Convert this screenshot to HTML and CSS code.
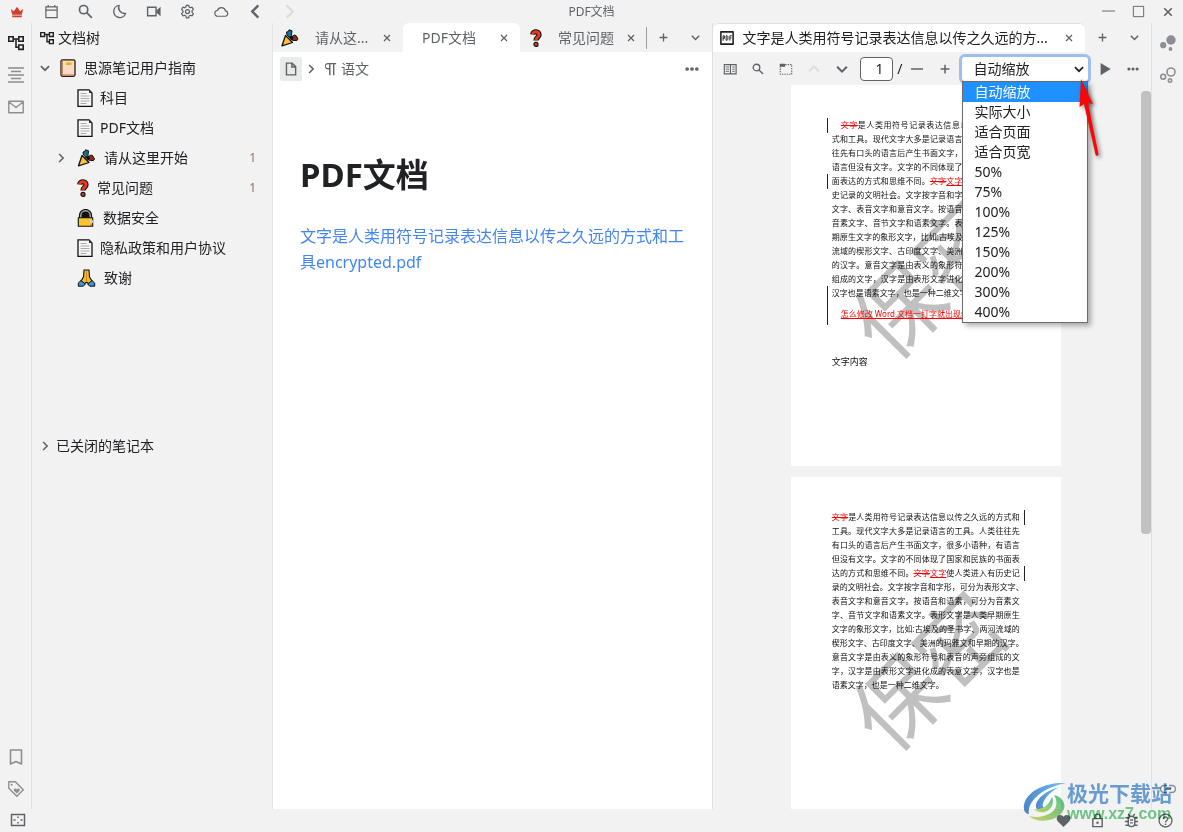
FILE: index.html
```html
<!DOCTYPE html>
<html lang="zh-CN">
<head>
<meta charset="utf-8">
<meta name="viewport" content="width=device-width, initial-scale=1">
<title>PDF文档</title>
<link rel="stylesheet" href="styles.css">
</head>
<body>
<svg class="sprite" aria-hidden="true">
  <symbol id="crown" viewBox="0 0 16 14"><path fill="#d23f31" d="M1 3.500 4.500 6 8 1l3.500 5L15 3.500 13.500 10h-11zM2.500 11h11v2h-11z"/></symbol>
  <symbol id="calendar" viewBox="0 0 16 16"><path fill="none" stroke="currentColor" stroke-width="1.300" d="M2 3h12v11.500H2zM2 6.500h12M4.500 1v2M11.500 1v2"/></symbol>
  <symbol id="search" viewBox="0 0 16 16"><g fill="none" stroke="currentColor" stroke-width="1.800"><circle cx="6" cy="6" r="4.400"/><path d="m9.300 9.300 5.500 5.500"/></g></symbol>
  <symbol id="moon" viewBox="0 0 16 16"><path fill="none" stroke="currentColor" stroke-width="1.500" stroke-linejoin="round" d="M7.500 1.500A6.500 6.500 0 1 0 14.500 10 6.300 6.300 0 0 1 7.500 1.500z"/></symbol>
  <symbol id="video" viewBox="0 0 16 16"><path fill="none" stroke="currentColor" stroke-width="1.500" d="M1.700 3.500h9v9h-9z"/><path fill="currentColor" d="m11 7 4.500-4v10L11 9z"/></symbol>
  <symbol id="gear" viewBox="0 0 24 24"><g fill="none" stroke="currentColor" stroke-width="2"><path stroke-linejoin="round" d="m10 2-.6 2.900-2 1.100-2.800-.9-2 3.500 2.100 2v2.800l-2.100 2 2 3.500 2.800-.9 2 1.100L10 22h4l.6-2.900 2-1.100 2.800.9 2-3.500-2.100-2v-2.800l2.100-2-2-3.500-2.800.9-2-1.100L14 2z"/><circle cx="12" cy="12" r="3.200"/></g></symbol>
  <symbol id="cloud" viewBox="0 0 16 16"><path fill="none" stroke="currentColor" stroke-width="1.200" d="M4 13a3 3 0 0 1-.3-6 4.400 4.400 0 0 1 8.500.3A2.900 2.900 0 0 1 12.300 13z"/></symbol>
  <symbol id="left" viewBox="0 0 16 16"><path fill="none" stroke="currentColor" stroke-width="2.500" d="M11 1.500 4.500 8l6.500 6.500"/></symbol>
  <symbol id="right" viewBox="0 0 16 16"><path fill="none" stroke="currentColor" stroke-width="2.500" d="M5 1.500 11.500 8 5 14.500"/></symbol>
  <symbol id="down" viewBox="0 0 16 16"><path fill="none" stroke="currentColor" stroke-width="2.700" d="M1.500 5 8 11.500 14.500 5"/></symbol>
  <symbol id="up" viewBox="0 0 16 16"><path fill="none" stroke="currentColor" stroke-width="2.500" d="M1.500 11 8 4.500l6.500 6.500"/></symbol>
  <symbol id="min" viewBox="0 0 16 16"><path stroke="currentColor" d="M1 7.500h14"/></symbol>
  <symbol id="max" viewBox="0 0 16 16"><path fill="none" stroke="currentColor" d="M2.500 2.500h11v11h-11z"/></symbol>
  <symbol id="close" viewBox="0 0 16 16"><path stroke="currentColor" stroke-width="2.600" d="m2 2 12 12M14 2 2 14"/></symbol>
  <symbol id="plus" viewBox="0 0 16 16"><path stroke="currentColor" stroke-width="2.400" d="M8 1v14M1 8h14"/></symbol>
  <symbol id="minus" viewBox="0 0 16 16"><path stroke="currentColor" stroke-width="2" d="M0 8h16"/></symbol>
  <symbol id="more" viewBox="0 0 16 16"><g fill="currentColor"><circle cx="2.500" cy="8" r="2.100"/><circle cx="8" cy="8" r="2.100"/><circle cx="13.500" cy="8" r="2.100"/></g></symbol>
  <symbol id="play" viewBox="0 0 16 16"><path fill="currentColor" d="M3 1 14.500 8 3 15z"/></symbol>
  <symbol id="tree" viewBox="0 0 16 16"><path fill="none" stroke="currentColor" stroke-width="1.600" d="M.8 1.800h4.400v4.400H.8zM10.800 1.800h4.400v4.400h-4.400zM10.800 10h4.400v4.400h-4.400zM5.200 4h5.600M8 4v8.200h2.800"/></symbol>
  <symbol id="outline" viewBox="0 0 16 16"><path stroke="currentColor" stroke-width="1.500" d="M0 1h16M3 4.500h10M0 8h16M3 11.500h10M0 15h16"/></symbol>
  <symbol id="mail" viewBox="0 0 16 16"><path fill="none" stroke="currentColor" stroke-width="1.400" stroke-linejoin="round" d="M.8 2.300h14.400v11.400H.8zM1 3l7 5.500L15 3"/></symbol>
  <symbol id="bookmark" viewBox="0 0 16 16"><path fill="none" stroke="currentColor" stroke-width="1.600" stroke-linejoin="round" d="M2.500 1h11v14L8 12.500 2.500 15z"/></symbol>
  <symbol id="tag" viewBox="0 0 16 16"><path fill="none" stroke="currentColor" stroke-width="1.400" stroke-linejoin="round" d="M.8.8h6.500l8 8-6.500 6.500-8-8z"/><circle cx="3.700" cy="3.700" r="1" fill="currentColor"/><path fill="currentColor" d="M8.800 12.500 6 9.700c-1-1.200.8-3 2.200-1.700l.6.600.6-.6c1.400-1.300 3.200.5 2.200 1.700z"/></symbol>
  <symbol id="frame" viewBox="0 0 16 16"><path fill="none" stroke="currentColor" stroke-width="1.500" d="M1.500 2.500h13v11h-13z"/><path stroke="currentColor" stroke-width="1.500" d="M8 4.500V6M8 10v1.500M3.500 8h2M10.500 8h2"/></symbol>
  <symbol id="dots" viewBox="0 0 16 16"><g fill="currentColor"><circle cx="11" cy="5" r="4.700"/><circle cx="3.200" cy="10.200" r="3.100"/><circle cx="10.500" cy="14" r="1.900"/></g></symbol>
  <symbol id="rings" viewBox="0 0 16 16"><g fill="none" stroke="currentColor" stroke-width="1.600"><circle cx="11" cy="5" r="4"/><circle cx="3.200" cy="9.700" r="2.400"/><circle cx="10" cy="13.500" r="1.700"/></g></symbol>
  <symbol id="link" viewBox="0 0 16 16"><path fill="none" stroke="currentColor" stroke-width="1.500" d="M7 4.500H4a3.500 3.500 0 0 0 0 7h3M9 4.500h3a3.500 3.500 0 0 1 0 7H9M5 8h6"/></symbol>
  <symbol id="file" viewBox="0 0 16 16"><path fill="none" stroke="currentColor" stroke-width="1.600" d="M2.800 1.300h6.500l4 4v9.400H2.800zM9 1.500v4.200h4.200"/></symbol>
  <symbol id="pilcrow" viewBox="0 0 16 16"><path fill="currentColor" d="M6 8.500A3.700 3.700 0 0 1 6 1h9v1.600h-2V15h-1.600V2.600H8.600V15H7V8.500z"/><path fill="#fff" d="M5.500 2.600H7v4.300H5.500a2.100 2.100 0 0 1 0-4.300"/></symbol>
  <symbol id="pdf" viewBox="0 0 16 16"><path fill="none" stroke="currentColor" stroke-width="1.800" stroke-linejoin="round" d="M1 1h14v14H1z"/><path fill="none" stroke="currentColor" stroke-width="1.100" d="M3.500 11V5.500H5v3H3.500M7 5.500h1.300l.7 1v3l-.7 1H7zM11.300 11V5.500h2.200M11.300 8h1.700"/></symbol>
  <symbol id="panel" viewBox="0 0 16 16"><path fill="none" stroke="currentColor" stroke-width="1.300" d="M1.500 3h13.500v10.500H1.500zM8.500 3v10.500"/><path stroke="currentColor" d="M3 5.700h4M3 8.200h4M3 10.700h4M10.500 5.700h3M10.500 8.200h3M10.500 10.700h3"/></symbol>
  <symbol id="area" viewBox="0 0 16 16"><path fill="none" stroke="currentColor" stroke-width="1.300" stroke-dasharray="1.500 1.300" d="M1.500 3h13v11h-13z"/><path fill="currentColor" d="M1 2h6v3.500H1z"/></symbol>
  <symbol id="heart" viewBox="0 0 16 16"><path fill="currentColor" d="M8 15 2 9C-1.500 5 3 0 7 3l1 1 1-1c4-3 8.500 2 5 6z"/></symbol>
  <symbol id="lock" viewBox="0 0 16 16"><path fill="none" stroke="currentColor" stroke-width="1.500" d="M3 6h10v8.500H3zM5.200 6V4a2.800 2.800 0 0 1 5.600 0v2"/><circle cx="8" cy="10.300" r="1.300" fill="currentColor"/></symbol>
  <symbol id="bug" viewBox="0 0 16 16"><path fill="none" stroke="currentColor" stroke-width="1.500" d="M4.500 7a3.500 3.500 0 0 1 7 0v4a3.500 3.500 0 0 1-7 0zM1.500 5h3M11.500 5h3M1 9h3.500M11.500 9H15M1.500 13h3.500M11 13h3.500M4.500 1l1.800 2.500M11.500 1 9.700 3.500M6.500 7.500h3M6.500 10.500h3"/></symbol>
  <symbol id="help" viewBox="0 0 16 16"><g fill="none" stroke="currentColor" stroke-width="1.400"><circle cx="8" cy="8" r="6.900"/><path d="M5.700 6.500c0-3 4.600-3 4.600-.2C10.300 8 8 8 8 10"/></g><circle cx="8" cy="12" r=".9" fill="currentColor"/></symbol>
  <symbol id="e-book" viewBox="0 0 16 18"><rect x="1" y=".8" width="14" height="16.500" rx="1.500" fill="#f7d9c6" stroke="#2a1a12" stroke-width="1.300"/><path fill="#c98a68" d="M1.700 1.500h1.300v15H1.700z"/><path fill="#e4b800" d="M6 3.500h5.500v2.500H6z"/><path stroke="#b87955" d="M2 16h12"/></symbol>
  <symbol id="e-doc" viewBox="0 0 16 18"><path fill="#f7f7f7" stroke="#111" stroke-width="1.300" d="M1 .8h11L15 4v13.300H1z"/><path stroke="#aaa" d="M3.500 4.500h6M3.500 7h9M3.500 9.500h9M3.500 12h9M3.500 14.500h6"/><path fill="#333" d="M12 1v3h3z"/></symbol>
  <symbol id="e-party" viewBox="0 0 18 18"><path fill="#fcc13b" stroke="#111" stroke-width="1.300" stroke-linejoin="round" d="M1 16.800 4.500 6.500l7 7z"/><path fill="#19738d" stroke="#111" d="M6 6 5.500 3l2-.5.500-1.700 3 1-.5 4.500-2 2z"/><path fill="#8e2921" stroke="#111" d="m10 9 3-3 2 .5L17 10l-1 1.500h-3l-2-.5z"/><path fill="#111" d="m7.500 8 4-1.500 1 3-2 2z"/></symbol>
  <symbol id="e-question" viewBox="0 0 12 18"><path fill="none" stroke="#111" stroke-width="5.200" d="M2.700 5.500C3 1.500 9.300 2 9 6c-.2 2.500-3 2.500-3 5.500"/><path fill="none" stroke="#e83a20" stroke-width="3" d="M2.700 5.200C3 1.500 9.300 2 9 6c-.2 2.500-3 2.500-3 5"/><circle cx="6" cy="15.400" r="2" fill="#e83a20" stroke="#111" stroke-width="1.200"/></symbol>
  <symbol id="e-lock" viewBox="0 0 17 18"><path fill="#111" stroke="#111" stroke-width="1.200" d="M2 9V6.500a6 6 0 0 1 12 0V9z"/><path fill="none" stroke="#a9adb0" stroke-width="1.400" d="M3.300 9V6.500a4.700 4.700 0 0 1 9.400 0V9"/><path fill="#fcc32e" stroke="#111" stroke-width="1.100" d="M.8 8.800h14.400v8.400H.8z"/><circle cx="14" cy="12.500" r="1.800" fill="#ccc"/><path stroke="#c33" d="M13.500 15.500v2"/></symbol>
  <symbol id="e-pray" viewBox="0 0 18 18"><path fill="#fbb92c" stroke="#111" stroke-width="1.100" d="M6.500 1h5l.5 7 2.800 4.500-3 3L9 13l-2.800 2.500-3-3L6 8z"/><path stroke="#c98a1c" d="M9 2v11"/><path fill="#3497d6" stroke="#111" d="M3.500 11.500.8 14v3.200h5l2-2.200zM14.500 11.500l2.700 2.500v3.200h-5l-2-2.200z"/></symbol>
</svg>

<header class="topbar">
  <nav class="topbar-tools" aria-label="工具栏">
    <button class="icon-btn" aria-label="会员"><svg class="i14"><use href="#crown"/></svg></button>
    <button class="icon-btn" aria-label="日记"><svg><use href="#calendar"/></svg></button>
    <button class="icon-btn" aria-label="搜索"><svg><use href="#search"/></svg></button>
    <button class="icon-btn" aria-label="外观"><svg><use href="#moon"/></svg></button>
    <button class="icon-btn" aria-label="录屏"><svg><use href="#video"/></svg></button>
    <button class="icon-btn" aria-label="设置"><svg><use href="#gear"/></svg></button>
    <button class="icon-btn" aria-label="云端"><svg><use href="#cloud"/></svg></button>
    <button class="icon-btn" aria-label="后退"><svg><use href="#left"/></svg></button>
    <button class="icon-btn faint" aria-label="前进"><svg><use href="#right"/></svg></button>
  </nav>
  <div class="window-title">PDF文档</div>
  <div class="window-controls">
    <button class="icon-btn" aria-label="最小化"><svg><use href="#min"/></svg></button>
    <button class="icon-btn" aria-label="最大化"><svg><use href="#max"/></svg></button>
    <button class="icon-btn" aria-label="关闭"><svg class="i10"><use href="#close"/></svg></button>
  </div>
</header>

<main class="workspace">
  <nav class="dock dock-left" aria-label="左侧栏">
    <button class="icon-btn active" aria-label="文档树"><svg class="i16"><use href="#tree"/></svg></button>
    <button class="icon-btn" aria-label="大纲"><svg class="i16"><use href="#outline"/></svg></button>
    <button class="icon-btn" aria-label="收集箱"><svg class="i16"><use href="#mail"/></svg></button>
    <span class="spacer"></span>
    <button class="icon-btn" aria-label="书签"><svg class="i16"><use href="#bookmark"/></svg></button>
    <button class="icon-btn" aria-label="标签"><svg class="i16"><use href="#tag"/></svg></button>
  </nav>

  <aside class="tree">
    <div class="tree-title"><svg class="i14"><use href="#tree"/></svg>文档树</div>
    <ul class="tree-list">
      <li class="row"><svg class="arrow"><use href="#down"/></svg><svg class="emoji book"><use href="#e-book"/></svg>思源笔记用户指南</li>
      <li class="row child"><svg class="emoji w16"><use href="#e-doc"/></svg>科目</li>
      <li class="row child"><svg class="emoji w16"><use href="#e-doc"/></svg>PDF文档</li>
      <li class="row child open"><svg class="arrow"><use href="#right"/></svg><svg class="emoji w19"><use href="#e-party"/></svg>请从这里开始<span class="count">1</span></li>
      <li class="row child"><svg class="emoji w12"><use href="#e-question"/></svg>常见问题<span class="count">1</span></li>
      <li class="row child"><svg class="emoji w18"><use href="#e-lock"/></svg>数据安全</li>
      <li class="row child"><svg class="emoji w16"><use href="#e-doc"/></svg>隐私政策和用户协议</li>
      <li class="row child"><svg class="emoji w19"><use href="#e-pray"/></svg>致谢</li>
    </ul>
    <div class="row closed"><svg class="arrow"><use href="#right"/></svg>已关闭的笔记本</div>
  </aside>

  <section class="pane editor">
    <div class="tabs">
      <div class="tab tab-start"><svg class="emoji w18"><use href="#e-party"/></svg><span>请从这...</span><button class="close" aria-label="关闭标签"><svg><use href="#close"/></svg></button></div>
      <div class="tab tab-doc current"><span>PDF文档</span><button class="close" aria-label="关闭标签"><svg><use href="#close"/></svg></button></div>
      <div class="tab tab-faq"><svg class="emoji w12"><use href="#e-question"/></svg><span>常见问题</span><button class="close" aria-label="关闭标签"><svg><use href="#close"/></svg></button></div>
      <div class="tab-actions">
        <button class="icon-btn" aria-label="新建"><svg class="i8"><use href="#plus"/></svg></button>
        <button class="icon-btn" aria-label="切换"><svg class="i8"><use href="#down"/></svg></button>
      </div>
    </div>
    <div class="breadcrumb">
      <button class="doc-btn" aria-label="文档"><svg class="i14"><use href="#file"/></svg></button>
      <svg class="i10 crumb-arrow"><use href="#right"/></svg>
      <svg class="i14"><use href="#pilcrow"/></svg>
      <span>语文</span>
      <button class="icon-btn more" aria-label="更多"><svg class="i14"><use href="#more"/></svg></button>
    </div>
    <article class="document">
      <h1>PDF文档</h1>
      <p><a href="#">文字是人类用符号记录表达信息以传之久远的方式和工具encrypted.pdf</a></p>
    </article>
  </section>

  <section class="pane viewer">
    <div class="tabs">
      <div class="tab tab-pdf current"><svg class="i14"><use href="#pdf"/></svg><span>文字是人类用符号记录表达信息以传之久远的方...</span><button class="close" aria-label="关闭标签"><svg><use href="#close"/></svg></button></div>
      <div class="tab-actions">
        <button class="icon-btn" aria-label="新建"><svg class="i8"><use href="#plus"/></svg></button>
        <button class="icon-btn" aria-label="切换"><svg class="i8"><use href="#down"/></svg></button>
      </div>
    </div>
    <div class="pdf-toolbar">
      <button class="icon-btn" aria-label="侧栏"><svg class="i14"><use href="#panel"/></svg></button>
      <button class="icon-btn" aria-label="查找"><svg class="i12"><use href="#search"/></svg></button>
      <button class="icon-btn" aria-label="矩形标注"><svg class="i14"><use href="#area"/></svg></button>
      <button class="icon-btn faint" aria-label="上一页"><svg class="i12"><use href="#up"/></svg></button>
      <button class="icon-btn" aria-label="下一页"><svg class="i12"><use href="#down"/></svg></button>
      <input class="page-no" type="text" value="1" aria-label="页码">
      <span class="slash">/</span>
      <button class="icon-btn" aria-label="缩小"><svg class="i12"><use href="#minus"/></svg></button>
      <button class="icon-btn" aria-label="放大"><svg class="i10"><use href="#plus"/></svg></button>
      <div class="zoom">
        <select aria-label="缩放"><option>自动缩放</option><option>实际大小</option><option>适合页面</option><option>适合页宽</option></select>
        <svg class="zoom-arrow"><use href="#down"/></svg>
        <ul class="zoom-menu" role="listbox" aria-label="缩放选项">
          <li role="option" aria-selected="true">自动缩放</li>
          <li role="option">实际大小</li>
          <li role="option">适合页面</li>
          <li role="option">适合页宽</li>
          <li role="option">50%</li>
          <li role="option">75%</li>
          <li role="option">100%</li>
          <li role="option">125%</li>
          <li role="option">150%</li>
          <li role="option">200%</li>
          <li role="option">300%</li>
          <li role="option">400%</li>
        </ul>
        <svg class="pointer" viewBox="0 0 32 84" aria-hidden="true"><path fill="#fb0505" d="M6 1 18 26l-5-1 10.500 51a1.500 1.500 0 0 1-3 .5L9 26l-4.500 3z"/></svg>
      </div>
      <button class="icon-btn" aria-label="演示"><svg class="i14"><use href="#play"/></svg></button>
      <button class="icon-btn" aria-label="更多"><svg class="i12"><use href="#more"/></svg></button>
    </div>
    <div class="pages">
      <div class="page">
        <div class="watermark">保密</div>
        <p class="indent mark"><del>文字</del>是人类用符号记录表达信息以传之久远的方</p>
        <p>式和工具。现代文字大多是记录语言的工具。人类往</p>
        <p>往先有口头的语言后产生书面文字，很多小语种，有</p>
        <p>语言但没有文字。文字的不同体现了国家和民族的书</p>
        <p class="mark">面表达的方式和思维不同。<del>文字</del><ins>文字</ins>使人类进入有历</p>
        <p>史记录的文明社会。文字按字音和字形，可分为表形</p>
        <p>文字、表音文字和意音文字。按语音和语素，可分为</p>
        <p>音素文字、音节文字和语素文字。表形文字是人类早</p>
        <p>期原生文字的象形文字，比如:古埃及的圣书字、两河</p>
        <p>流域的楔形文字、古印度文字、美洲的玛雅文和早期</p>
        <p>的汉字。意音文字是由表义的象形符号和表音的声旁</p>
        <p>组成的文字，汉字是由表形文字进化成的表意文字，</p>
        <p class="mark tall last">汉字也是语素文字，也是一种二维文字。</p>
        <p class="indent last inserted"><ins>怎么修改 Word 文档一打字就出现红</ins></p>
        <p class="last caption">文字内容</p>
      </div>
      <div class="page second">
        <div class="watermark">保密</div>
        <p class="mark"><del>文字</del>是人类用符号记录表达信息以传之久远的方式和</p>
        <p>工具。现代文字大多是记录语言的工具。人类往往先</p>
        <p>有口头的语言后产生书面文字，很多小语种，有语言</p>
        <p>但没有文字。文字的不同体现了国家和民族的书面表</p>
        <p class="mark">达的方式和思维不同。<del>文字</del><ins>文字</ins>使人类进入有历史记</p>
        <p>录的文明社会。文字按字音和字形，可分为表形文字、</p>
        <p>表音文字和意音文字。按语音和语素，可分为音素文</p>
        <p>字、音节文字和语素文字。表形文字是人类早期原生</p>
        <p>文字的象形文字，比如:古埃及的圣书字、两河流域的</p>
        <p>楔形文字、古印度文字、美洲的玛雅文和早期的汉字。</p>
        <p>意音文字是由表义的象形符号和表音的声旁组成的文</p>
        <p>字，汉字是由表形文字进化成的表意文字，汉字也是</p>
        <p class="last">语素文字，也是一种二维文字。</p>
      </div>
      <div class="thumb"></div>
    </div>
  </section>

  <nav class="dock dock-right" aria-label="右侧栏">
    <button class="icon-btn" aria-label="关系图"><svg class="i16"><use href="#dots"/></svg></button>
    <button class="icon-btn" aria-label="全局关系图"><svg class="i16"><use href="#rings"/></svg></button>
    <span class="spacer"></span>
    <button class="icon-btn" aria-label="反向链接"><svg class="i16"><use href="#link"/></svg></button>
  </nav>
</main>

<footer class="status">
  <button class="icon-btn" aria-label="隐藏停靠栏"><svg class="i16"><use href="#frame"/></svg></button>
  <span class="spacer"></span>
  <button class="icon-btn" aria-label="喜欢"><svg><use href="#heart"/></svg></button>
  <button class="icon-btn" aria-label="锁定"><svg><use href="#lock"/></svg></button>
  <button class="icon-btn" aria-label="反馈"><svg><use href="#bug"/></svg></button>
  <button class="icon-btn" aria-label="帮助"><svg><use href="#help"/></svg></button>
</footer>

<div class="site-mark">
  <svg viewBox="0 0 44 40" aria-hidden="true">
    <defs>
      <linearGradient id="g1" x1="0" y1="0" x2="1" y2="0"><stop offset="0" stop-color="#4f86cc"/><stop offset="1" stop-color="#6fc4ee"/></linearGradient>
      <linearGradient id="g2" x1="0" y1="1" x2="1" y2="0"><stop offset="0" stop-color="#d6e06a"/><stop offset="1" stop-color="#55c08a"/></linearGradient>
    </defs>
    <path fill="url(#g1)" d="M43 1C24 0 4 8 1 23c-1 6 2 9 5 9C4 20 18 6 43 1z"/>
    <path fill="url(#g1)" d="M37 5C24 8 12 17 13 25c1 5 7 5 10 1-4 0-4-3-2-7 3-6 9-11 16-14z"/>
    <path fill="url(#g2)" d="M31 13c15 4 13 19-1 24-9 3-19 2-24-3 13 3 25-2 27-10 1-4 0-8-2-11z"/>
    <path fill="url(#g2)" d="M29 15c3 6-1 14-8 15-5 1-8-1-10-3 9 1 15-4 18-12z"/>
  </svg>
  <div><strong>极光下载站</strong><span>www.xz7.com</span></div>
</div>
</body>
</html>
```
FILE: styles.css
```css
* { box-sizing: border-box; }

body {
  margin: 0;
  height: 100vh;
  display: flex;
  flex-direction: column;
  overflow: hidden;
  background: #f2f2f2;
  color: #202124;
  font: 14px/20px "Noto Sans", "Noto Sans CJK SC", sans-serif;
}

.sprite { position: absolute; width: 0; height: 0; }
ul { list-style: none; margin: 0; padding: 0; }
p { margin: 0; }
svg { flex: none; width: 15px; height: 15px; }
.i8 { width: 9px; height: 9px; }
.i10 { width: 10px; height: 10px; }
.i12 { width: 12px; height: 12px; }
.i14 { width: 14px; height: 14px; }
.i16 { width: 16px; height: 16px; }
.spacer { flex: 1; }

button {
  display: flex;
  align-items: center;
  justify-content: center;
  padding: 0;
  border: 0;
  background: none;
  color: #5f6368;
  font: inherit;
}
.icon-btn.faint { color: #dcdddd; }

/* Top bar */
.topbar { display: grid; grid-template-columns: 1fr auto 1fr; height: 23px; align-items: center; }
.topbar-tools { display: flex; }
.topbar-tools .icon-btn { width: 34px; height: 23px; }
.window-title { color: #5f6368; font-size: 12px; }
.window-controls { display: flex; justify-content: flex-end; }
.window-controls .icon-btn { width: 30px; height: 23px; }

.workspace { flex: 1; display: flex; min-height: 0; }

/* Docks */
.dock { display: flex; flex-direction: column; width: 32px; padding: 4px 0; }
.dock-left { border-right: 1px solid #dfe0e1; }
.dock-right { border-left: 1px solid #dfe0e1; }
.dock .icon-btn { height: 32px; color: #8b8f93; }
.dock .active { color: #202124; }

/* Document tree */
.tree { width: 241px; border-right: 1px solid #e4e5e6; }
.tree-title { display: flex; align-items: center; gap: 4px; height: 30px; padding-left: 8px; }
.row { display: flex; align-items: center; height: 30px; padding: 0 16px 0 8px; }
.child { padding-left: 45px; }
.open { padding-left: 24px; }
.arrow { width: 10px; height: 10px; margin-right: 10px; color: #5f6368; }
.open .arrow { margin-right: 11px; }
.closed .arrow { margin-right: 6px; }
.emoji { height: 18px; margin-right: 8px; }
.book { width: 16px; }
.w12 { width: 12px; }
.w16 { width: 16px; }
.w18 { width: 18px; }
.w19 { width: 19px; }
.child .w16 { margin-right: 7px; }
.count { margin-left: auto; color: #96705a; font-size: 12px; }
.closed { margin-top: 138px; }

/* Panes */
.pane { flex: 1; display: flex; flex-direction: column; min-width: 0; }
.editor { background: #fff; }
.viewer { border-left: 1px solid #dfe0e1; }
.tabs { display: flex; height: 29px; background: #f2f2f2; color: #5f6368; }
.tab { display: flex; align-items: center; padding: 0 10px; }
.tab span { flex: 1; white-space: nowrap; }
.tab .emoji { margin-right: 16px; }
.current { background: #fff; border-radius: 6px 6px 0 0; }
.close { width: 12px; height: 12px; }
.close svg { width: 8px; height: 8px; }
.tab-start { width: 130px; padding-left: 8px; }
.tab-doc { width: 117px; padding-left: 19px; }
.tab-faq { width: 127px; padding-left: 10px; background: linear-gradient(#9a9da0, #9a9da0) right center / 1px 22px no-repeat; }
.tab-pdf { flex: 1; min-width: 0; padding-left: 7px; border-top: 1px solid #dfe0e1; color: #202124; }
.tab-pdf svg { margin-right: 9px; }
.tab-pdf .close svg { margin: 0; }
.tab-actions { display: flex; }
.tab-actions .icon-btn { width: 32px; }
.viewer .tab-actions { padding: 0 1px; }

.breadcrumb { display: flex; align-items: center; height: 33px; padding: 0 10px 0 7px; color: #5f6368; }
.doc-btn { width: 22px; height: 24px; border-radius: 2px; background: #e9eaea; }
.crumb-arrow { margin: 0 7px 0 4px; }
.breadcrumb span { margin-left: 4px; }
.more { margin-left: auto; width: 20px; height: 24px; }

.document { padding: 68px 27px; }
h1 { margin: 0 0 26px; font-size: 33px; line-height: 44px; font-weight: 700; }
.document p { font-size: 16px; line-height: 26px; }
.document a { color: #4285f4; text-decoration: none; }

/* PDF toolbar */
.pdf-toolbar { display: flex; align-items: center; height: 33px; padding: 0 4px 0 3px; }
.pdf-toolbar .icon-btn { width: 28px; height: 28px; }
.page-no {
  width: 33px;
  height: 24px;
  margin-left: 4px;
  padding: 0 8px;
  border: 1px solid #5f6368;
  border-radius: 4px;
  background: #fff;
  color: #202124;
  font: inherit;
  text-align: right;
}
.slash { width: 10px; text-align: right; }
.zoom { position: relative; flex: 1; z-index: 2; }
.zoom select {
  display: block;
  width: 100%;
  height: 30px;
  padding: 0 12px;
  border: 3px solid #9bbfee;
  border-radius: 6px;
  background: #fff;
  color: #202124;
  font: inherit;
  appearance: none;
}
.zoom-arrow { position: absolute; right: 7px; top: 10px; width: 10px; height: 10px; }
.zoom-menu {
  position: absolute;
  left: 3px;
  right: 3px;
  top: 27px;
  border: 1px solid #6b6b6b;
  background: #fff;
  box-shadow: 3px 3px 5px rgba(0, 0, 0, .3);
}
.zoom-menu li { height: 20px; padding-left: 12px; }
.zoom-menu [aria-selected] { background: #1e90ff; color: #fff; }
.pointer {
  position: absolute;
  right: -16px;
  top: 24px;
  width: 32px;
  height: 84px;
  filter: drop-shadow(2px 2px 2px rgba(0, 0, 0, .5));
}

/* PDF pages */
.pages {
  position: relative;
  flex: 1;
  min-height: 0;
  overflow: hidden;
  display: flex;
  flex-direction: column;
  align-items: center;
  gap: 11px;
  padding-right: 12px;
}
.page {
  position: relative;
  flex: none;
  width: 270px;
  height: 381px;
  padding: 33px 41px;
  background: #fff;
  color: #111;
  font-size: 8px;
  line-height: 14px;
}
.page p { position: relative; height: 14px; white-space: nowrap; text-align-last: justify; }
.page .last { text-align-last: left; }
.page .indent { padding-left: 9px; }
.page .inserted { margin-top: 7px; }
.page .caption { margin-top: 34px; font-size: 9px; }
del, ins { color: #f00; }
.mark::before { content: ""; position: absolute; left: -5px; top: 0; width: 1px; height: 15px; background: #222; }
.tall::before { height: 39px; }
.second .mark::before { left: auto; right: -5px; }
.watermark {
  position: absolute;
  left: 50%;
  top: 50%;
  transform: translate(-50%, -50%) rotate(-45deg);
  color: #c0c0c0;
  font: 400 88px/88px "Noto Sans CJK SC", sans-serif;
  white-space: nowrap;
}
.thumb { position: absolute; right: 0; top: 6px; width: 10px; height: 443px; border-radius: 4px; background: #c1c1c1; }

/* Status bar */
.status { display: flex; height: 23px; padding: 0 1px; }
.status .icon-btn { width: 34px; height: 22px; }

/* Site badge over the corner */
.site-mark {
  position: absolute;
  right: 11px;
  bottom: 9px;
  display: flex;
  align-items: center;
  pointer-events: none;
  mix-blend-mode: multiply;
}
.site-mark svg { width: 44px; height: 40px; }
.site-mark div { display: flex; flex-direction: column; }
.site-mark strong { color: #6ea3dc; font-size: 21px; line-height: 24px; }
.site-mark span { color: #74ce8c; font: 700 16px/18px "Liberation Sans", sans-serif; }
```
